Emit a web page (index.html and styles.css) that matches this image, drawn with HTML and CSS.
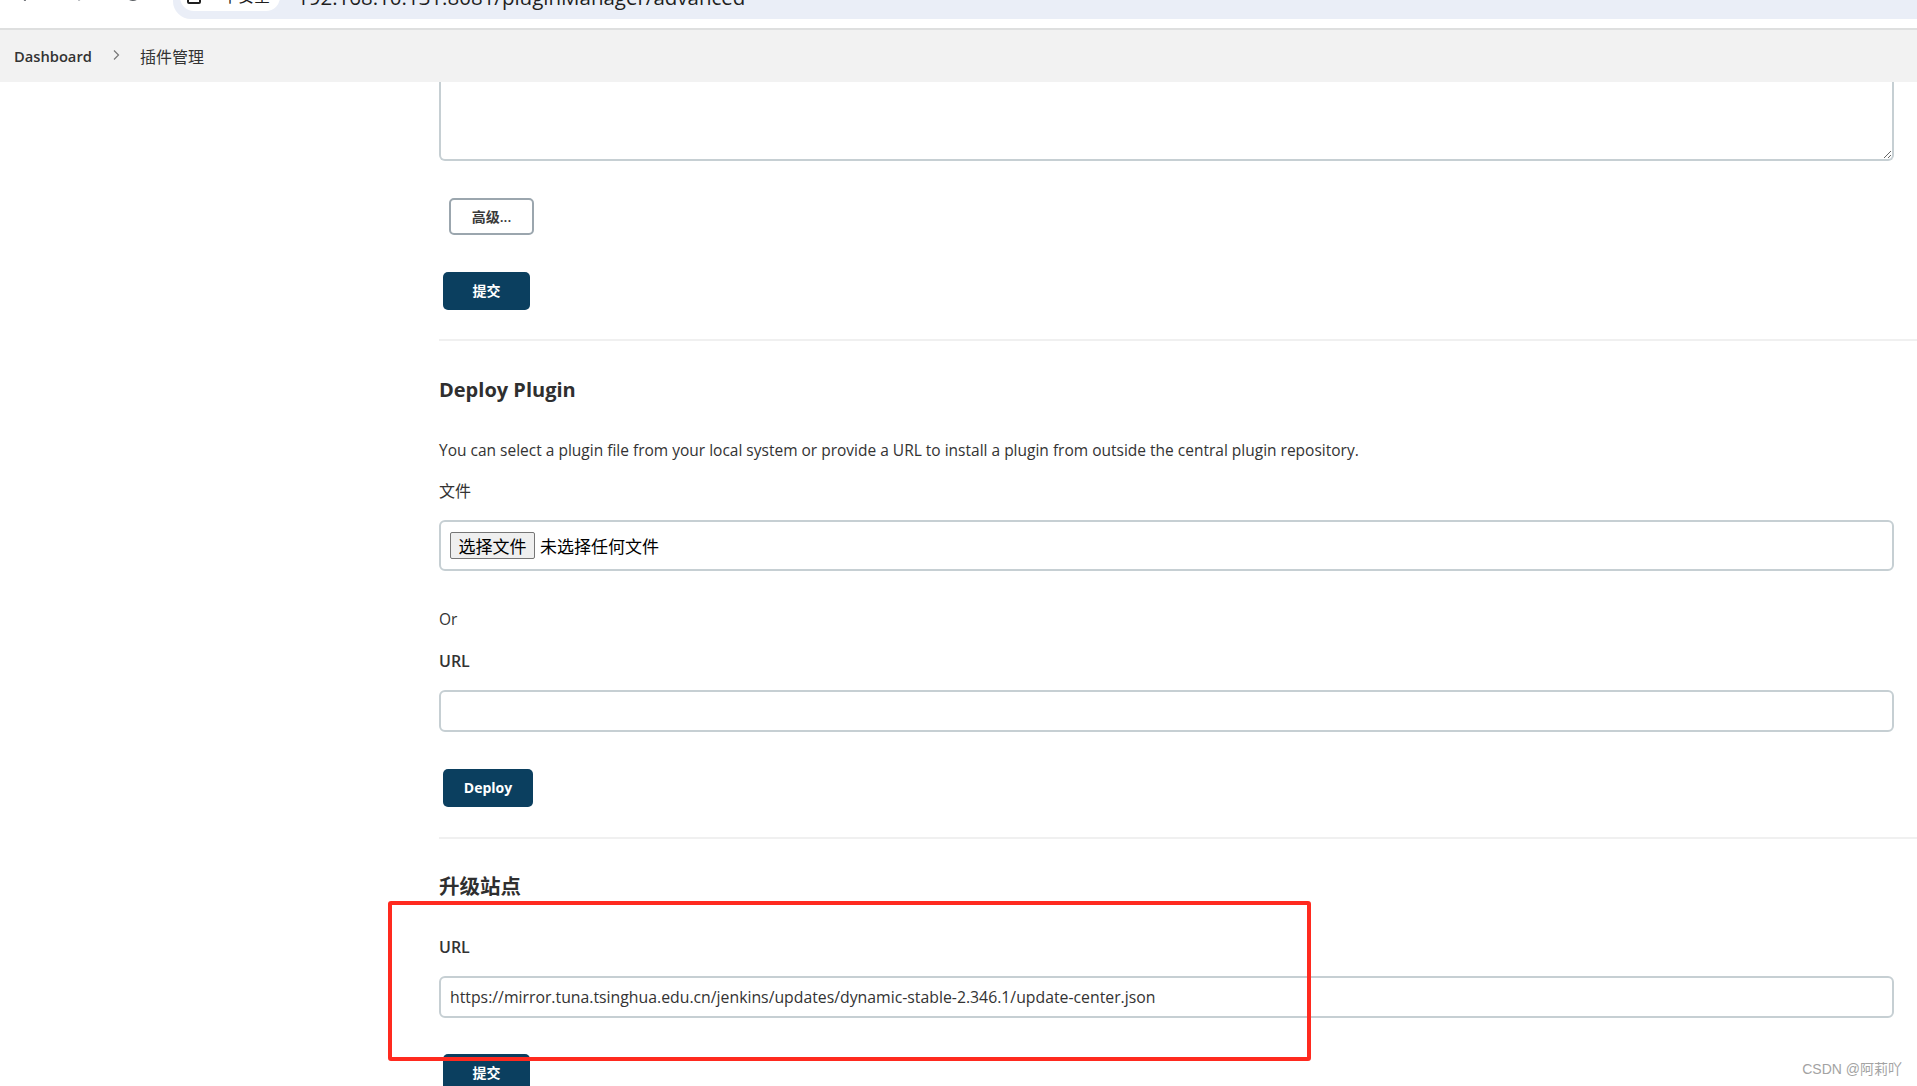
FILE: index.html
```html
<!DOCTYPE html>
<html lang="zh-CN">
<head>
<meta charset="utf-8">
<title>插件管理 [Jenkins]</title>
<link rel="stylesheet" href="styles.css">
</head>
<body>
<div class="browser-strip">
  <div class="nav-icons">
    <svg class="nav-ic ic-back" viewBox="0 0 18 18" width="18" height="18"><path d="M16 9H3M9 3L3 9l6 6" fill="none" stroke="#5f6368" stroke-width="2" stroke-linecap="round" stroke-linejoin="round"/></svg>
    <svg class="nav-ic ic-fwd" viewBox="0 0 18 18" width="18" height="18"><path d="M2 9h13M9 3l6 6-6 6" fill="none" stroke="#b0b3b8" stroke-width="2" stroke-linecap="round" stroke-linejoin="round"/></svg>
    <svg class="nav-ic ic-reload" viewBox="0 0 18 18" width="18" height="18"><path d="M15 9a6 6 0 1 1-2-4.5M15 2v4h-4" fill="none" stroke="#5f6368" stroke-width="2.2" stroke-linecap="round" stroke-linejoin="round"/></svg>
  </div>
  <div class="omnibox">
    <div class="chip">
      <svg class="chip-ic" viewBox="0 0 14 14" width="14" height="14"><rect x="1" y="4" width="12" height="8" rx="1" fill="none" stroke="#1f1f1f" stroke-width="2"/><path d="M4 4V2h6v2" fill="none" stroke="#1f1f1f" stroke-width="2"/></svg>
      <span class="chip-text">不安全</span>
    </div>
    <span class="omni-url">192.168.10.131:8081/pluginManager/advanced</span>
  </div>
</div>

<nav class="breadcrumb-bar">
  <a class="crumb crumb-root">Dashboard</a>
  <svg class="crumb-sep" viewBox="0 0 8 12" width="8" height="12"><path d="M2 1.5l4.5 4.5L2 10.5" fill="none" stroke="#777" stroke-width="1.2"/></svg>
  <a class="crumb crumb-current">插件管理</a>
</nav>

<div class="page">
  <aside class="side-panel"></aside>
  <main class="main-panel">
    <textarea class="proxy-textarea" aria-label="No Proxy Host"></textarea>
    <button class="btn btn-secondary btn-advanced">高级...</button>
    <button class="btn btn-primary btn-submit-top">提交</button>
    <hr class="section-sep sep-1">

    <h2 class="section-title title-deploy">Deploy Plugin</h2>
    <p class="desc">You can select a plugin file from your local system or provide a URL to install a plugin from outside the central plugin repository.</p>
    <div class="form-label label-file">文件</div>
    <div class="file-box">
      <span class="file-btn">选择文件</span>
      <span class="file-status">未选择任何文件</span>
    </div>
    <div class="or-text">Or</div>
    <div class="form-label label-url">URL</div>
    <input class="text-input input-deploy" type="text" aria-label="URL">
    <button class="btn btn-primary btn-deploy">Deploy</button>
    <hr class="section-sep sep-2">

    <h2 class="section-title title-site">升级站点</h2>
    <div class="form-label label-site-url">URL</div>
    <input class="text-input input-site" type="text" aria-label="URL" value="https://mirror.tuna.tsinghua.edu.cn/jenkins/updates/dynamic-stable-2.346.1/update-center.json">
    <button class="btn btn-primary btn-submit-bottom">提交</button>
  </main>
</div>

<div class="annotation-box"></div>
<div class="watermark">CSDN @阿莉吖</div>
</body>
</html>
```

FILE: styles.css
```css
* { box-sizing: border-box; }

html, body {
  margin: 0;
  padding: 0;
  height: 100%;
  overflow: hidden;
  background: #ffffff;
}

body {
  position: relative;
  font-family: "Open Sans", "Noto Sans CJK SC", sans-serif;
  color: #333333;
}

/* ---------- browser chrome strip ---------- */
.browser-strip {
  height: 28px;
  display: flex;
  align-items: flex-start;
  overflow: hidden;
  background: #ffffff;
}

.nav-icons {
  width: 173px;
  flex: 0 0 173px;
  height: 19px;
  display: flex;
  align-items: flex-start;
  overflow: hidden;
}

.nav-ic { flex: 0 0 auto; margin-top: -15px; }
.ic-back { margin-left: 16px; }
.ic-fwd { margin-left: 36px; }
.ic-reload { margin-left: 36px; }

.omnibox {
  flex: 1;
  height: 19px;
  background: #eaeef7;
  border-bottom-left-radius: 18px;
  display: flex;
  align-items: flex-start;
  padding-left: 7px;
  overflow: hidden;
}

.chip {
  width: 100px;
  height: 31px;
  margin-top: -20px;
  background: #ffffff;
  border-radius: 0 0 14px 14px;
  display: flex;
  align-items: flex-end;
  padding: 0 0 8px 7px;
  gap: 21px;
}

.chip-ic { margin-bottom: -2px; }

.chip-text {
  font-family: "Noto Sans CJK SC", sans-serif;
  font-size: 16px;
  line-height: 16px;
  color: #1f1f1f;
}

.omni-url {
  margin-left: 17px;
  margin-top: -13px;
  font-family: "Open Sans", sans-serif;
  font-size: 20.5px;
  line-height: 20px;
  color: #1f1f1f;
  white-space: nowrap;
}

/* ---------- breadcrumb ---------- */
.breadcrumb-bar {
  height: 54px;
  border-top: 2px solid #dedfdf;
  background: #f2f2f2;
  display: flex;
  align-items: center;
  padding-left: 14px;
}

.crumb {
  color: #333333;
  text-decoration: none;
}

.crumb-root {
  font-size: 14.7px;
  font-weight: 600;
}

.crumb-sep { margin: -2px 20px 0 20px; }

.crumb-current {
  font-family: "Noto Sans CJK SC", sans-serif;
  font-size: 16px;
}

/* ---------- page ---------- */
.page {
  display: grid;
  grid-template-columns: 439px 1fr;
}

.main-panel {
  display: flex;
  flex-direction: column;
  align-items: flex-start;
  padding-right: 23px;
}

.proxy-textarea {
  align-self: stretch;
  height: 79px;
  border: 2px solid #c6cfd3;
  border-top: 0;
  border-radius: 0 0 6px 6px;
  background: #ffffff;
  outline: none;
  font-family: inherit;
}

.btn {
  display: block;
  border-radius: 5px;
  font-family: "Open Sans", "Noto Sans CJK SC", sans-serif;
  font-size: 14px;
  line-height: 20px;
  cursor: pointer;
  padding: 0;
}

.btn-secondary {
  background: #ffffff;
  border: 2px solid #9ba6ae;
  color: #3a3a3a;
  font-weight: 600;
}

.btn-primary {
  background: #0b3f5f;
  border: 0;
  color: #ffffff;
  font-weight: 700;
}

.btn-advanced {
  margin: 37px 0 0 10px;
  width: 85px;
  height: 37px;
}

.btn-submit-top {
  margin: 37px 0 0 4px;
  width: 87px;
  height: 38px;
}

.section-sep {
  align-self: stretch;
  margin: 0 -23px 0 0;
  height: 2px;
  border: 0;
  background: #f0f0f0;
}

.sep-1 { margin-top: 29px; }
.sep-2 { margin-top: 30px; }

.section-title {
  margin: 0;
  font-size: 20px;
  line-height: 28px;
  font-weight: 700;
  color: #2f2f2f;
}

.title-deploy { margin-top: 35px; }
.title-site {
  margin-top: 33px;
  font-size: 20.5px;
}

.desc {
  margin: 36px 0 0;
  font-size: 15.5px;
  line-height: 20px;
}

.form-label {
  font-size: 16px;
  line-height: 20px;
  font-weight: 600;
}

.label-file {
  margin-top: 21px;
  font-weight: 400;
}

.label-url { margin-top: 22px; }
.label-site-url { margin-top: 37px; }

.file-box {
  align-self: stretch;
  margin-top: 19px;
  height: 51px;
  border: 2px solid #c6cfd3;
  border-radius: 6px;
  display: flex;
  align-items: center;
  padding: 0 9px;
}

.file-btn {
  width: 85px;
  height: 27px;
  display: flex;
  align-items: center;
  justify-content: center;
  background: #efefef;
  border: 1px solid #767676;
  border-radius: 2px;
  font-family: "Noto Sans CJK SC", sans-serif;
  font-size: 17px;
  color: #000000;
}

.file-status {
  margin-left: 5px;
  font-family: "Noto Sans CJK SC", sans-serif;
  font-size: 17px;
  color: #000000;
}

.or-text {
  margin-top: 38px;
  font-size: 15.5px;
  line-height: 20px;
}

.text-input {
  align-self: stretch;
  margin-top: 19px;
  height: 42px;
  border: 2px solid #c6cfd3;
  border-radius: 6px;
  padding: 0 9px;
  font-family: "Open Sans", sans-serif;
  font-size: 15.8px;
  color: #333333;
  background: #ffffff;
  outline: none;
}

.btn-deploy {
  margin: 37px 0 0 4px;
  width: 90px;
  height: 38px;
}

.btn-submit-bottom {
  margin: 36px 0 0 4px;
  width: 87px;
  height: 38px;
}

/* ---------- overlays ---------- */
.annotation-box {
  position: absolute;
  left: 388px;
  top: 901px;
  width: 923px;
  height: 160px;
  border: 4px solid #ff2a1f;
  border-radius: 3px;
}

.watermark {
  position: absolute;
  right: 15px;
  bottom: 8px;
  font-family: "Liberation Sans", "Noto Sans CJK SC", sans-serif;
  font-size: 14px;
  color: #a3a3a3;
  text-shadow: 0 0 2px #ffffff;
}
```
